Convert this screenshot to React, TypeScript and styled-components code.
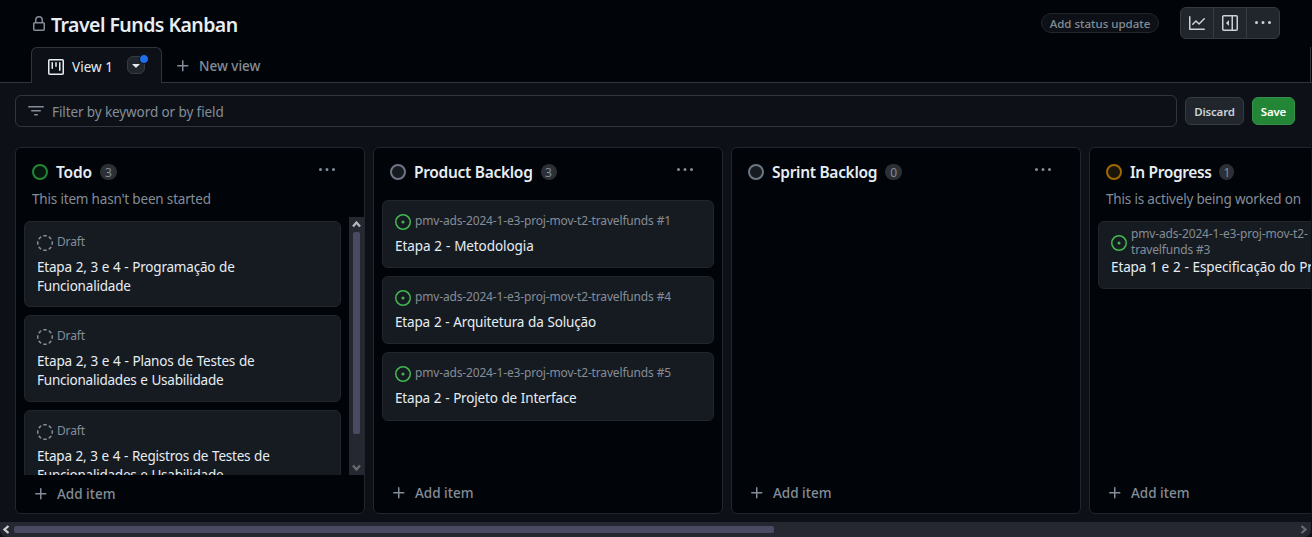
import React from "react";
import styled, { createGlobalStyle } from "styled-components";

const Global = createGlobalStyle`
  * { box-sizing: border-box; }
  body { margin: 0; background: #0d1117; color: #e6edf3; font-family: "Noto Sans", sans-serif; overflow: hidden; }
`;

const icons = {
  lock: "M4 4a4 4 0 0 1 8 0v2h.25c.966 0 1.75.784 1.75 1.75v5.5A1.75 1.75 0 0 1 12.25 15h-8.5A1.75 1.75 0 0 1 2 13.25v-5.5C2 6.784 2.784 6 3.75 6H4Zm8.25 3.5h-8.5a.25.25 0 0 0-.25.25v5.5c0 .138.112.25.25.25h8.5a.25.25 0 0 0 .25-.25v-5.5a.25.25 0 0 0-.25-.25ZM10.5 6V4a2.5 2.5 0 1 0-5 0v2Z",
  project: "M1.75 0h12.5C15.216 0 16 .784 16 1.75v12.5A1.75 1.75 0 0 1 14.25 16H1.75A1.75 1.75 0 0 1 0 14.25V1.75C0 .784.784 0 1.75 0ZM1.5 1.75v12.5c0 .138.112.25.25.25h12.5a.25.25 0 0 0 .25-.25V1.75a.25.25 0 0 0-.25-.25H1.75a.25.25 0 0 0-.25.25ZM11.75 3a.75.75 0 0 1 .75.75v7.5a.75.75 0 0 1-1.5 0v-7.5a.75.75 0 0 1 .75-.75Zm-8.25.75a.75.75 0 0 1 1.5 0v5.5a.75.75 0 0 1-1.5 0ZM8 3a.75.75 0 0 1 .75.75v3.5a.75.75 0 0 1-1.5 0v-3.5A.75.75 0 0 1 8 3Z",
  triangle: "m4.427 7.427 3.396 3.396a.25.25 0 0 0 .354 0l3.396-3.396A.25.25 0 0 0 11.396 7H4.604a.25.25 0 0 0-.177.427Z",
  plus: "M7.75 2a.75.75 0 0 1 .75.75V7h4.25a.75.75 0 0 1 0 1.5H8.5v4.25a.75.75 0 0 1-1.5 0V8.5H2.75a.75.75 0 0 1 0-1.5H7V2.75A.75.75 0 0 1 7.75 2Z",
  filter: "M.75 3h14.5a.75.75 0 0 1 0 1.5H.75a.75.75 0 0 1 0-1.5ZM3 7.75A.75.75 0 0 1 3.75 7h8.5a.75.75 0 0 1 0 1.5h-8.5A.75.75 0 0 1 3 7.75Zm3 4a.75.75 0 0 1 .75-.75h2.5a.75.75 0 0 1 0 1.5h-2.5a.75.75 0 0 1-.75-.75Z",
  graph: "M1.5 1.75V13.5h13.75a.75.75 0 0 1 0 1.5H.75a.75.75 0 0 1-.75-.75V1.75a.75.75 0 0 1 1.5 0Zm14.28 2.53-5.25 5.25a.75.75 0 0 1-1.06 0L7 7.06 4.28 9.78a.751.751 0 0 1-1.042-.018.751.751 0 0 1-.018-1.042l3.25-3.25a.75.75 0 0 1 1.06 0L10 7.94l4.72-4.72a.751.751 0 0 1 1.042.018.751.751 0 0 1 .018 1.042Z",
  sidebar: "m4.177 7.823 2.396-2.396A.25.25 0 0 1 7 5.604v4.792a.25.25 0 0 1-.427.177L4.177 8.177a.25.25 0 0 1 0-.354ZM0 1.75C0 .784.784 0 1.75 0h12.5C15.216 0 16 .784 16 1.75v12.5A1.75 1.75 0 0 1 14.25 16H1.75A1.75 1.75 0 0 1 0 14.25Zm1.75-.25a.25.25 0 0 0-.25.25v12.5c0 .138.112.25.25.25H9.5v-13Zm12.5 13a.25.25 0 0 0 .25-.25V1.75a.25.25 0 0 0-.25-.25H11v13Z",
  kebab: "M8 9a1.5 1.5 0 1 0 0-3 1.5 1.5 0 0 0 0 3ZM1.5 9a1.5 1.5 0 1 0 0-3 1.5 1.5 0 0 0 0 3Zm13 0a1.5 1.5 0 1 0 0-3 1.5 1.5 0 0 0 0 3Z",
  issue: "M8 9.5a1.5 1.5 0 1 0 0-3 1.5 1.5 0 0 0 0 3ZM8 0a8 8 0 1 1 0 16A8 8 0 0 1 8 0ZM1.5 8a6.5 6.5 0 1 0 13 0 6.5 6.5 0 0 0-13 0Z",
  draft: "M14.307 11.655a.75.75 0 0 1 .165 1.048 8.05 8.05 0 0 1-1.769 1.77.75.75 0 0 1-.883-1.214 6.552 6.552 0 0 0 1.44-1.439.75.75 0 0 1 1.047-.165Zm-2.652-9.962a.75.75 0 0 1 1.048-.165 8.05 8.05 0 0 1 1.77 1.769.75.75 0 0 1-1.214.883 6.552 6.552 0 0 0-1.439-1.44.75.75 0 0 1-.165-1.047ZM6.749.097a8.073 8.073 0 0 1 2.502 0 .75.75 0 1 1-.233 1.482 6.558 6.558 0 0 0-2.036 0A.751.751 0 0 1 6.749.097ZM.955 6.125a.75.75 0 0 1 .624.857 6.558 6.558 0 0 0 0 2.036.75.75 0 1 1-1.482.233 8.073 8.073 0 0 1 0-2.502.75.75 0 0 1 .858-.624Zm14.09 0a.75.75 0 0 1 .858.624c.13.829.13 1.673 0 2.502a.75.75 0 1 1-1.482-.233 6.558 6.558 0 0 0 0-2.036.75.75 0 0 1 .624-.857Zm-8.92 8.92a.75.75 0 0 1 .857-.624 6.558 6.558 0 0 0 2.036 0 .75.75 0 1 1 .233 1.482c-.829.13-1.673.13-2.502 0a.75.75 0 0 1-.624-.858Zm-4.432-3.39a.75.75 0 0 1 1.048.165 6.552 6.552 0 0 0 1.439 1.44.751.751 0 0 1-.883 1.212 8.05 8.05 0 0 1-1.77-1.769.75.75 0 0 1 .166-1.048Zm2.652-9.962A.75.75 0 0 1 4.18 2.741 6.556 6.556 0 0 0 2.74 4.18a.751.751 0 0 1-1.212-.883 8.05 8.05 0 0 1 1.769-1.77.75.75 0 0 1 1.048.165Z",
};

const Svg = styled.svg<{ $color: string }>`
  display: block;
  flex: none;
  fill: ${(p) => p.$color};
`;

const Icon = ({ name, color = "#848d97" }: { name: keyof typeof icons; color?: string }) => (
  <Svg $color={color} width={16} height={16} viewBox="0 0 16 16">
    <path d={icons[name]} />
  </Svg>
);

/* One run of text; size, weight and tracking vary by use. */
const Text = styled.span<{ $size?: number; $weight?: number; $color?: string; $track?: number; $line?: number; $word?: number; $drop?: number }>`
  display: block;
  white-space: pre;
  font-size: ${(p) => p.$size ?? 13.5}px;
  font-weight: ${(p) => p.$weight ?? 400};
  color: ${(p) => p.$color ?? "#e6edf3"};
  letter-spacing: ${(p) => p.$track ?? 0}px;
  word-spacing: ${(p) => p.$word ?? 0}px;
  line-height: ${(p) => p.$line ?? 20}px;
  padding-top: ${(p) => p.$drop ?? 0}px;
`;

const Page = styled.div`
  width: 1312px;
  height: 537px;
  display: flex;
  flex-direction: column;
  overflow: hidden;
  background: #0d1117;
`;

const Header = styled.header`
  height: 83px;
  flex: none;
  display: flex;
  flex-direction: column;
  background: #010409;
  border-bottom: 1px solid #30363d;
`;

const TitleRow = styled.div`
  height: 47px;
  flex: none;
  display: flex;
  align-items: center;
  padding: 0 32px 1px 31px;
`;

const LockSlot = styled.span`
  padding-top: 2px;
`;

const Title = styled.h1`
  margin: 3px auto 0 4px;
  font-size: 19.5px;
  line-height: 30px;
  font-weight: 600;
  letter-spacing: -0.55px;
`;

const StatusButton = styled.button`
  width: 118px;
  height: 20px;
  margin-right: 21px;
  padding: 0;
  display: flex;
  align-items: center;
  justify-content: center;
  background: #0d1117;
  border: 1px solid #21262d;
  border-radius: 10px;
  font-family: inherit;
`;

const ButtonGroup = styled.div`
  display: flex;
  height: 32px;
  width: 100px;
  background: #21262d;
  border: 1px solid #363b42;
  border-radius: 6px;
`;

const GroupButton = styled.div`
  flex: 1;
  display: flex;
  align-items: center;
  justify-content: center;
  & + & { border-left: 1px solid #363b42; }
`;

const Tabs = styled.nav`
  height: 35px;
  flex: none;
  display: flex;
  padding-left: 31px;
  border-right: 1px solid #30363d;
  margin-right: 1px;
`;

const Tab = styled.div`
  width: 131px;
  height: 36px;
  padding: 2px 0 0 16px;
  display: flex;
  align-items: center;
  gap: 8px;
  background: #0d1117;
  border: 1px solid #30363d;
  border-bottom: 0;
  border-radius: 6px 6px 0 0;
`;

const TabMenu = styled.div`
  position: relative;
  width: 18px;
  height: 18px;
  margin: -3px 16px 0 auto;
  display: flex;
  align-items: center;
  justify-content: center;
  background: #21262d;
  border: 1px solid #363b42;
  border-radius: 6px;
`;

const ChangeDot = styled.span`
  position: absolute;
  top: -3px;
  right: -5px;
  width: 10px;
  height: 10px;
  border-radius: 50%;
  background: #1f6feb;
  border: 1px solid #0d1117;
`;

const NewView = styled.div`
  display: flex;
  align-items: center;
  gap: 8px;
  padding: 3px 0 0 13px;
`;

const FilterRow = styled.div`
  display: flex;
  align-items: center;
  height: 56px;
  flex: none;
  gap: 8px;
  padding: 0 17px 0 15px;
`;

const FilterBox = styled.div`
  flex: 1;
  height: 32px;
  display: flex;
  align-items: center;
  gap: 8px;
  padding-left: 12px;
  border: 1px solid #30363d;
  border-radius: 6px;
`;

const Button = styled.button<{ $primary?: boolean }>`
  width: ${(p) => (p.$primary ? 43 : 59)}px;
  height: 28px;
  padding: 1px 0 0;
  display: flex;
  align-items: center;
  justify-content: center;
  background: ${(p) => (p.$primary ? "#238636" : "#21262d")};
  border: 1px solid ${(p) => (p.$primary ? "#35914a" : "#363b42")};
  border-radius: 6px;
  font-family: inherit;
`;

const Board = styled.main`
  flex: 1;
  display: flex;
  gap: 8px;
  padding: 8px 0 8px 15px;
  overflow: hidden;
  width: 1311px;
`;

const ColumnBox = styled.section`
  width: 350px;
  flex: none;
  display: flex;
  flex-direction: column;
  background: #010409;
  border: 1px solid #21262d;
  border-radius: 6px;
  overflow: hidden;
`;

const ColumnHead = styled.div`
  display: flex;
  align-items: center;
  height: 48px;
  flex: none;
  padding: 0 29px 0 16px;
`;

const StatusRing = styled.span<{ $ring: string; $fill: string }>`
  width: 16px;
  height: 16px;
  margin-right: 8px;
  border: 2px solid ${(p) => p.$ring};
  background: ${(p) => p.$fill};
  border-radius: 50%;
`;

const Counter = styled.span<{ $width: number }>`
  width: ${(p) => p.$width}px;
  height: 16px;
  margin: 0 auto 0 8px;
  border-radius: 8px;
  background: #2b3037;
  color: #848d97;
  font-size: 12px;
  line-height: 17px;
  text-align: center;
`;

const HeadMenu = styled.div`
  padding-bottom: 5px;
`;

const Description = styled.div`
  height: 22px;
  flex: none;
  margin-top: -7px;
  margin-bottom: 1px;
  padding-left: 16px;
`;

const ListArea = styled.div<{ $top: number }>`
  flex: 1;
  min-height: 0;
  display: flex;
  margin-top: ${(p) => p.$top}px;
`;

const Cards = styled.div`
  flex: 1;
  min-width: 0;
  display: flex;
  flex-direction: column;
  gap: 8px;
  padding: 4px 8px 0;
  overflow: hidden;
`;

const CardBox = styled.article<{ $height: number }>`
  height: ${(p) => p.$height}px;
  flex: none;
  padding: 10px 12px 0;
  background: #161b22;
  border: 1px solid #21262d;
  border-radius: 6px;
`;

const CardMeta = styled.div`
  display: flex;
  align-items: center;
  gap: 4px;
  height: 22px;
  margin-bottom: 4px;
`;

const MetaText = styled.div`
  margin-top: -2px;
`;

const VScroll = styled.div`
  width: 15px;
  display: flex;
  flex-direction: column;
  align-items: center;
  background: #252830;
`;

const VThumb = styled.div`
  width: 7px;
  height: 202px;
  margin-bottom: auto;
  border-radius: 2px;
  background: #4a4b62;
`;

const HScroll = styled.div`
  height: 15px;
  width: 1311px;
  flex: none;
  display: flex;
  align-items: center;
  background: #252830;
  border-radius: 0 0 7px 7px;
`;

const HThumb = styled.div`
  width: 760px;
  height: 7px;
  margin-right: auto;
  border-radius: 2px;
  background: #4a4b62;
`;

const Arrow = styled.svg`
  display: block;
  flex: none;
  fill: none;
  stroke-width: 2.3;
`;

const AddItem = styled.div<{ $low?: boolean }>`
  height: 38px;
  flex: none;
  display: flex;
  align-items: center;
  gap: 8px;
  padding: 0 0 ${(p) => (p.$low ? 0 : 2)}px 17px;
`;

type Line = { text: string; track?: number };
type CardData = { repo?: string; lines: Line[]; height: number };
type ColumnData = {
  name: string;
  track: number;
  count: number;
  badge: number;
  ring: string;
  fill: string;
  description?: string;
  cards: CardData[];
  scroll?: boolean;
};

const repo = "pmv-ads-2024-1-e3-proj-mov-t2-travelfunds";

const columns: ColumnData[] = [
  {
    name: "Todo", track: -0.15, count: 3, badge: 17, ring: "#238636", fill: "#07170f",
    description: "This item hasn't been started", scroll: true,
    cards: [
      { lines: [{ text: "Etapa 2, 3 e 4 - Programação de", track: -0.2 }, { text: "Funcionalidade" }], height: 86 },
      { lines: [{ text: "Etapa 2, 3 e 4 - Planos de Testes de", track: -0.19 }, { text: "Funcionalidades e Usabilidade", track: -0.23 }], height: 87 },
      { lines: [{ text: "Etapa 2, 3 e 4 - Registros de Testes de", track: -0.22 }, { text: "Funcionalidades e Usabilidade", track: -0.23 }], height: 87 },
    ],
  },
  {
    name: "Product Backlog", track: -0.3, count: 3, badge: 16, ring: "#6e7681", fill: "#161b22",
    cards: [
      { repo: `${repo} #1`, lines: [{ text: "Etapa 2 - Metodologia", track: -0.08 }], height: 68 },
      { repo: `${repo} #4`, lines: [{ text: "Etapa 2 - Arquitetura da Solução", track: -0.16 }], height: 68 },
      { repo: `${repo} #5`, lines: [{ text: "Etapa 2 - Projeto de Interface", track: -0.18 }], height: 69 },
    ],
  },
  { name: "Sprint Backlog", track: -0.3, count: 0, badge: 17, ring: "#6e7681", fill: "#161b22", cards: [] },
  {
    name: "In Progress", track: -0.38, count: 1, badge: 15, ring: "#9e6a03", fill: "#1c1509",
    description: "This is actively being worked on",
    cards: [
      {
        repo: "pmv-ads-2024-1-e3-proj-mov-t2-\ntravelfunds #3",
        lines: [{ text: "Etapa 1 e 2 - Especificação do Projeto", track: -0.12 }],
        height: 68,
      },
    ],
  },
];

const Card = ({ card }: { card: CardData }) => (
  <CardBox $height={card.height}>
    <CardMeta>
      {card.repo ? <Icon name="issue" color="#3fb950" /> : <Icon name="draft" />}
      <MetaText>
        <Text $size={12} $line={card.repo?.includes("\n") ? 16 : 18} $color="#848d97" $track={-0.16}>
          {card.repo ?? "Draft"}
        </Text>
      </MetaText>
    </CardMeta>
    {card.lines.map((line) => (
      <Text key={line.text} $line={18.5} $word={0.5} $track={line.track ?? -0.2}>{line.text}</Text>
    ))}
  </CardBox>
);

const Column = ({ col }: { col: ColumnData }) => (
  <ColumnBox>
    <ColumnHead>
      <StatusRing $ring={col.ring} $fill={col.fill} />
      <Text $size={15.5} $weight={600} $line={24} $track={col.track}>{col.name}</Text>
      <Counter $width={col.badge}>{col.count}</Counter>
      <HeadMenu><Icon name="kebab" /></HeadMenu>
    </ColumnHead>
    {col.description && (
      <Description><Text $color="#848d97" $track={-0.18}>{col.description}</Text></Description>
    )}
    <ListArea $top={col.description ? 5 : 0}>
      <Cards>{col.cards.map((c, i) => <Card key={i} card={c} />)}</Cards>
      {col.scroll && (
        <VScroll>
          <Arrow width="15" height="15" stroke="#b6b6bd"><path d="M4 9.5 7.5 5.5 11 9.5" /></Arrow>
          <VThumb />
          <Arrow width="15" height="15" stroke="#6a6b70"><path d="M4 5.5 7.5 9.5 11 5.5" /></Arrow>
        </VScroll>
      )}
    </ListArea>
    <AddItem $low={col.scroll}>
      <Icon name="plus" />
      <Text $weight={500} $color="#848d97">Add item</Text>
    </AddItem>
  </ColumnBox>
);

export default function App() {
  return (
    <Page>
      <Global />
      <Header>
        <TitleRow>
          <LockSlot><Icon name="lock" /></LockSlot>
          <Title>Travel Funds Kanban</Title>
          <StatusButton><Text $size={11.5} $weight={500} $color="#848d97" $drop={1}>Add status update</Text></StatusButton>
          <ButtonGroup>
            <GroupButton><Icon name="graph" color="#c9d1d9" /></GroupButton>
            <GroupButton><Icon name="sidebar" color="#c9d1d9" /></GroupButton>
            <GroupButton><Icon name="kebab" color="#c9d1d9" /></GroupButton>
          </ButtonGroup>
        </TitleRow>
        <Tabs>
          <Tab>
            <Icon name="project" color="#e6edf3" />
            <Text $track={0.05}>View 1</Text>
            <TabMenu><Icon name="triangle" color="#e6edf3" /><ChangeDot /></TabMenu>
          </Tab>
          <NewView>
            <Icon name="plus" />
            <Text $color="#848d97" $weight={500}>New view</Text>
          </NewView>
        </Tabs>
      </Header>
      <FilterRow>
        <FilterBox>
          <Icon name="filter" />
          <Text $color="#848d97" $track={-0.1} $drop={2}>Filter by keyword or by field</Text>
        </FilterBox>
        <Button><Text $size={11.5} $weight={600} $color="#c9d1d9" $track={-0.2}>Discard</Text></Button>
        <Button $primary><Text $size={11.5} $weight={600} $color="#ffffff" $track={-0.2}>Save</Text></Button>
      </FilterRow>
      <Board>{columns.map((c) => <Column key={c.name} col={c} />)}</Board>
      <HScroll>
        <Arrow width="14" height="15" stroke="#d0d0d4"><path d="M8.5 4 4.5 7.5 8.5 11" /></Arrow>
        <HThumb />
        <Arrow width="14" height="15" stroke="#6a6b70"><path d="M4.5 4 8.5 7.5 4.5 11" /></Arrow>
      </HScroll>
    </Page>
  );
}
